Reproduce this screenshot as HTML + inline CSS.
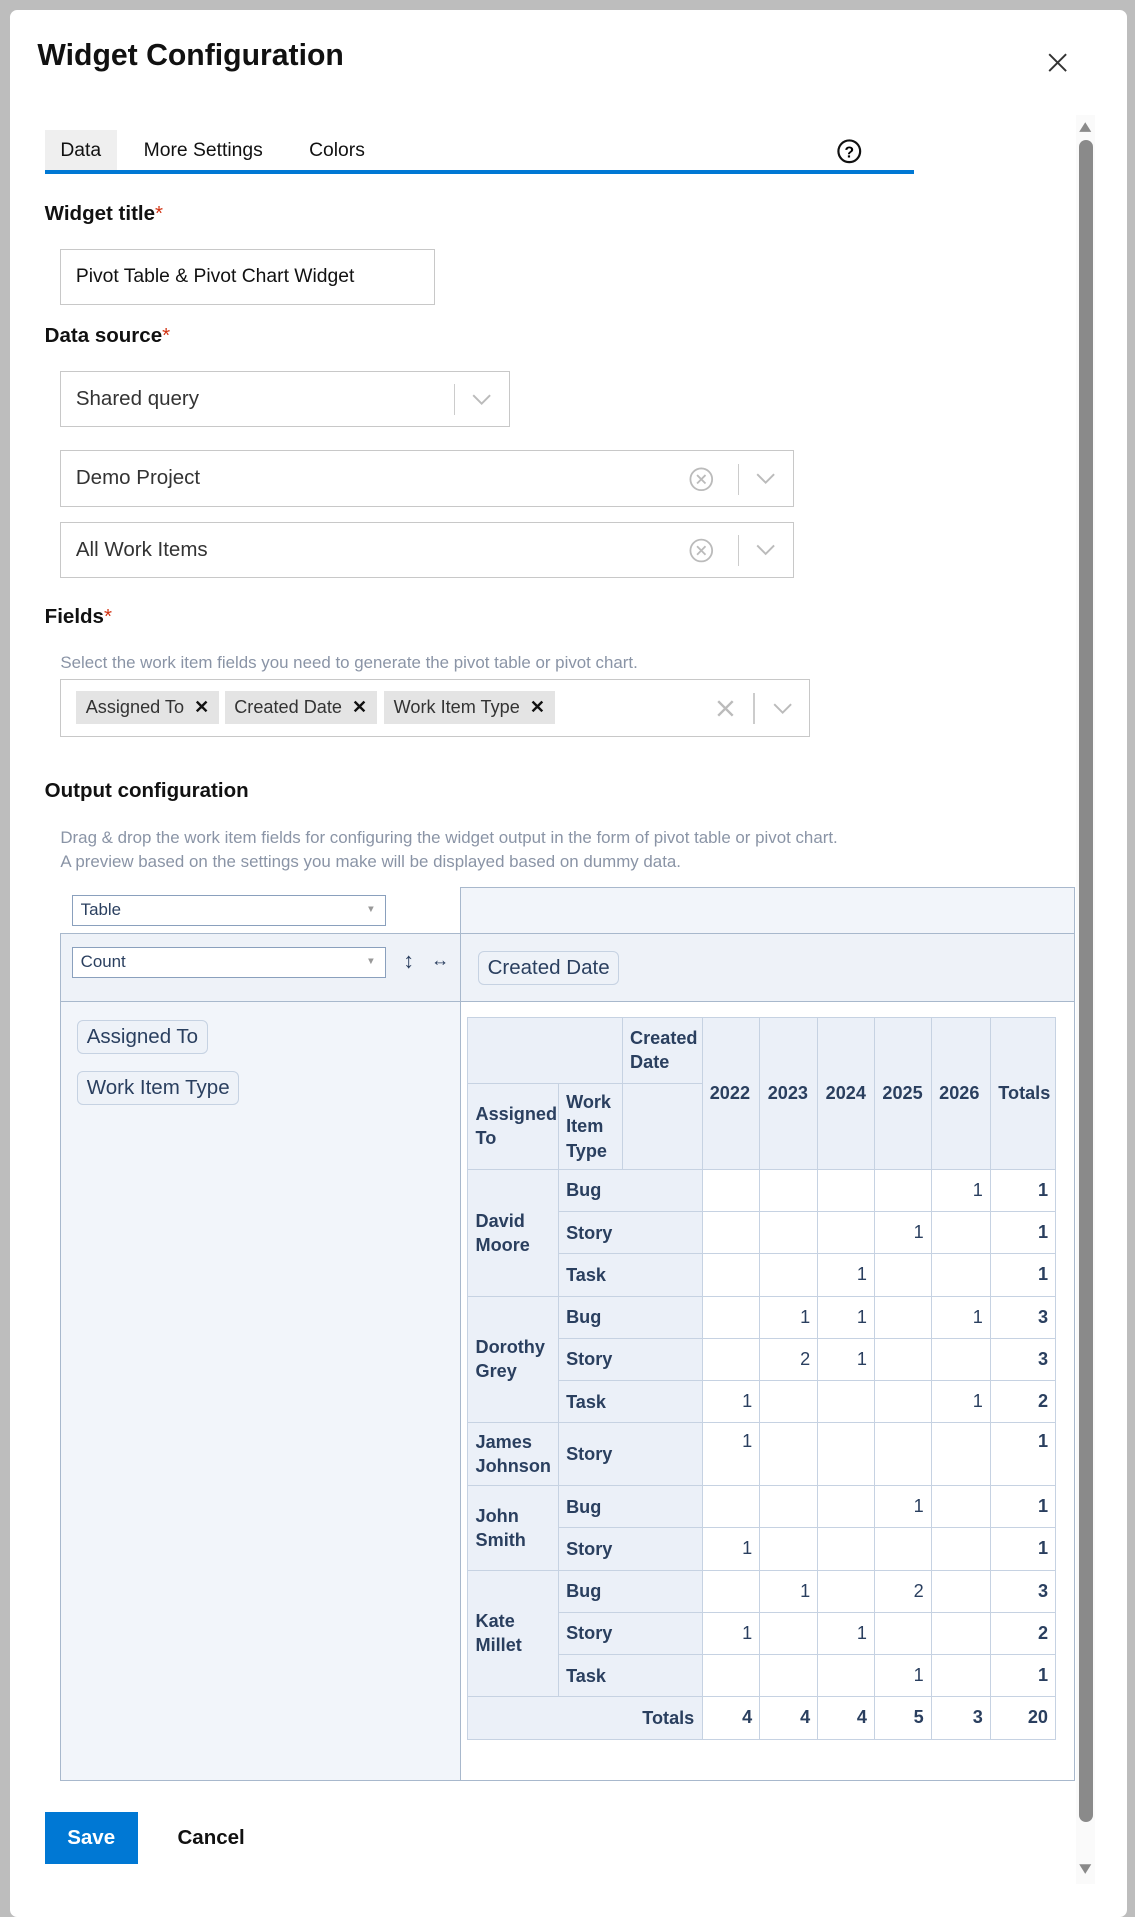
<!DOCTYPE html>
<html><head><meta charset="utf-8"><style>
*{box-sizing:border-box;margin:0;padding:0}
html,body{width:1135px;height:1893px;overflow:hidden;background:#bdbdbd;font-family:"Liberation Sans",sans-serif}
#w{position:absolute;left:0;top:0;width:940px;height:1568px;zoom:1.20745}
.a{position:absolute}
.dlg{left:8px;top:8px;width:925px;height:1580px;background:#fff;border-radius:6px}
.lbl{font-size:17px;font-weight:bold;color:#111}
.req{color:#d13212;font-weight:normal}
.inp{border:1px solid #c8c8c8;background:#fff;font-size:17px;color:#333}
.pill{background:#e4e4e4;font-size:15px;color:#333;height:28px;line-height:28px;padding:0 8px;display:inline-block}
.muted{color:#8a94a6;font-size:14px}
.pv{border:1px solid #a8b8cc}
.sel{background:#fff;border:1px solid #8aa0bd;font-size:14px;color:#2a3f5f;padding-left:6px;line-height:24px}
.chip{border:1px solid #c6d2e2;border-radius:5px;background:#eef2f8;font-size:17px;color:#2a3f5f;padding:0 7px;height:28px;line-height:26px}
table{border-collapse:collapse;font-size:15px;color:#2a3f5f;table-layout:fixed}
td,th{border:1px solid #c6d2e2;padding:0 6px}
th{background:#ebf0f8;font-weight:bold;text-align:left;line-height:20px}
td.v{text-align:right;background:#fff}
td.t{text-align:right;font-weight:bold;background:#fff}
</style></head><body><div id="w">
<div class="a dlg"></div>
<div class="a" style="left:31px;top:32px;font-size:25px;font-weight:bold;color:#111">Widget Configuration</div>
<svg class="a" style="left:868px;top:44px" width="16" height="16"><path d="M1 1L15 15M15 1L1 15" stroke="#333" stroke-width="1.6"/></svg>
<!-- scrollbar -->
<div class="a" style="left:891px;top:95px;width:16px;height:1465px;background:#fafafa"></div>
<svg class="a" style="left:893px;top:100px" width="12" height="10"><path d="M6 1L11 9H1Z" fill="#8a8a8a"/></svg>
<div class="a" style="left:894px;top:116px;width:11px;height:1393px;background:#8a8a8a;border-radius:6px"></div>
<svg class="a" style="left:893px;top:1543px" width="12" height="10"><path d="M6 9L11 1H1Z" fill="#8a8a8a"/></svg>
<!-- tabs -->
<div class="a" style="left:37px;top:108px;width:60px;height:36px;background:#efefef"></div>
<div class="a" style="left:50px;top:116px;font-size:16px;color:#111">Data</div>
<div class="a" style="left:119px;top:116px;font-size:16px;color:#111">More Settings</div>
<div class="a" style="left:256px;top:116px;font-size:16px;color:#111">Colors</div>
<svg class="a" style="left:692px;top:114px" width="22" height="22"><circle cx="11" cy="11" r="9" fill="none" stroke="#111" stroke-width="1.8"/><text x="11" y="16" font-size="13" font-weight="bold" text-anchor="middle" font-family="Liberation Sans">?</text></svg>
<div class="a" style="left:37px;top:141px;width:720px;height:3px;background:#0078d4"></div>
<div class="a lbl" style="left:37px;top:167px">Widget title<span class="req">*</span></div>
<div class="a inp" style="left:50px;top:206px;width:310px;height:47px;line-height:45px;padding-left:12px;color:#111;font-size:16px">Pivot Table &amp; Pivot Chart Widget</div>
<div class="a lbl" style="left:37px;top:268px">Data source<span class="req">*</span></div>
<div class="a inp" style="left:50px;top:307px;width:372px;height:47px;line-height:45px;padding-left:12px">Shared query</div>
<div class="a" style="left:376px;top:318px;width:1px;height:26px;background:#ccc"></div>
<svg class="a" style="left:391px;top:326px" width="16" height="10"><path d="M1 1L8 8L15 1" fill="none" stroke="#bbb" stroke-width="1.6"/></svg>
<div class="a inp" style="left:50px;top:373px;width:608px;height:47px;line-height:45px;padding-left:12px">Demo Project</div>
<div class="a inp" style="left:50px;top:432px;width:608px;height:47px;line-height:45px;padding-left:12px">All Work Items</div>
<svg class="a" style="left:570px;top:386px" width="22" height="80"><circle cx="11" cy="11" r="9" fill="none" stroke="#bbb" stroke-width="1.5"/><path d="M7.5 7.5L14.5 14.5M14.5 7.5L7.5 14.5" stroke="#bbb" stroke-width="1.5"/><circle cx="11" cy="70" r="9" fill="none" stroke="#bbb" stroke-width="1.5"/><path d="M7.5 66.5L14.5 73.5M14.5 66.5L7.5 73.5" stroke="#bbb" stroke-width="1.5"/></svg>
<div class="a" style="left:611px;top:384px;width:1px;height:26px;background:#ccc"></div>
<div class="a" style="left:611px;top:443px;width:1px;height:26px;background:#ccc"></div>
<svg class="a" style="left:626px;top:392px" width="16" height="70"><path d="M1 1L8 8L15 1M1 60L8 67L15 60" fill="none" stroke="#bbb" stroke-width="1.6"/></svg>
<div class="a lbl" style="left:37px;top:501px">Fields<span class="req">*</span></div>
<div class="a muted" style="left:50px;top:541px">Select the work item fields you need to generate the pivot table or pivot chart.</div>
<div class="a inp" style="left:50px;top:562px;width:621px;height:48px"></div>
<div class="a pill" style="left:63px;top:572px">Assigned To &nbsp;<b style="color:#111">✕</b></div>
<div class="a pill" style="left:186px;top:572px">Created Date &nbsp;<b style="color:#111">✕</b></div>
<div class="a pill" style="left:318px;top:572px">Work Item Type &nbsp;<b style="color:#111">✕</b></div>
<svg class="a" style="left:594px;top:580px" width="14" height="14"><path d="M1 1L13 13M13 1L1 13" stroke="#bbb" stroke-width="2"/></svg>
<div class="a" style="left:624px;top:574px;width:1px;height:26px;background:#ccc"></div>
<svg class="a" style="left:640px;top:582px" width="16" height="10"><path d="M1 1L8 8L15 1" fill="none" stroke="#bbb" stroke-width="1.6"/></svg>
<div class="a lbl" style="left:37px;top:645px">Output configuration</div>
<div class="a muted" style="left:50px;top:684px;line-height:20px">Drag &amp; drop the work item fields for configuring the widget output in the form of pivot table or pivot chart.<br>A preview based on the settings you make will be displayed based on dummy data.</div>
<!-- pivot ui -->
<div class="a" style="left:381px;top:735px;width:509px;height:39px;background:#f2f5fa;border:1px solid #a8b8cc"></div>
<div class="a sel" style="left:60px;top:741px;width:260px;height:26px">Table<span style="position:absolute;right:8px;font-size:8px;color:#999">▼</span></div>
<div class="a" style="left:50px;top:773px;width:840px;height:702px;border:1px solid #a8b8cc;background:#fff"></div>
<div class="a" style="left:50px;top:773px;width:840px;height:57px;background:#eef2f8;border:1px solid #a8b8cc"></div>
<div class="a" style="left:50px;top:829px;width:332px;height:646px;background:#f2f5fa;border:1px solid #a8b8cc"></div>
<div class="a" style="left:381px;top:773px;width:1px;height:702px;background:#a8b8cc"></div>
<div class="a sel" style="left:60px;top:784px;width:260px;height:26px">Count<span style="position:absolute;right:8px;font-size:8px;color:#999">▼</span></div>
<div class="a" style="left:334px;top:785px;font-size:18px;color:#2a3f5f">↕</div>
<div class="a" style="left:357px;top:787px;font-size:15px;color:#2a3f5f">↔</div>
<div class="a chip" style="left:396px;top:788px">Created Date</div>
<div class="a chip" style="left:64px;top:845px">Assigned To</div>
<div class="a chip" style="left:64px;top:887px">Work Item Type</div>
<table class="a" style="left:387px;top:842px;width:487px">
<colgroup><col style="width:75px"><col style="width:53px"><col style="width:66px"><col style="width:48px"><col style="width:48px"><col style="width:47px"><col style="width:47px"><col style="width:49px"><col style="width:54px"></colgroup>
<tr style="height:55px"><th colspan="2"></th><th>Created Date</th><th rowspan="2">2022</th><th rowspan="2">2023</th><th rowspan="2">2024</th><th rowspan="2">2025</th><th rowspan="2">2026</th><th rowspan="2">Totals</th></tr>
<tr style="height:71px"><th>Assigned To</th><th>Work Item Type</th><th></th></tr>
<tr style="height:35px"><th rowspan="3">David Moore</th><th colspan="2">Bug</th><td class="v"></td><td class="v"></td><td class="v"></td><td class="v"></td><td class="v">1</td><td class="t">1</td></tr>
<tr style="height:35px"><th colspan="2">Story</th><td class="v"></td><td class="v"></td><td class="v"></td><td class="v">1</td><td class="v"></td><td class="t">1</td></tr>
<tr style="height:35px"><th colspan="2">Task</th><td class="v"></td><td class="v"></td><td class="v">1</td><td class="v"></td><td class="v"></td><td class="t">1</td></tr>
<tr style="height:35px"><th rowspan="3">Dorothy Grey</th><th colspan="2">Bug</th><td class="v"></td><td class="v">1</td><td class="v">1</td><td class="v"></td><td class="v">1</td><td class="t">3</td></tr>
<tr style="height:35px"><th colspan="2">Story</th><td class="v"></td><td class="v">2</td><td class="v">1</td><td class="v"></td><td class="v"></td><td class="t">3</td></tr>
<tr style="height:35px"><th colspan="2">Task</th><td class="v">1</td><td class="v"></td><td class="v"></td><td class="v"></td><td class="v">1</td><td class="t">2</td></tr>
<tr style="height:52px"><th>James Johnson</th><th colspan="2">Story</th><td class="v" style="vertical-align:top;padding-top:6px">1</td><td class="v"></td><td class="v"></td><td class="v"></td><td class="v"></td><td class="t" style="vertical-align:top;padding-top:6px">1</td></tr>
<tr style="height:35px"><th rowspan="2">John Smith</th><th colspan="2">Bug</th><td class="v"></td><td class="v"></td><td class="v"></td><td class="v">1</td><td class="v"></td><td class="t">1</td></tr>
<tr style="height:35px"><th colspan="2">Story</th><td class="v">1</td><td class="v"></td><td class="v"></td><td class="v"></td><td class="v"></td><td class="t">1</td></tr>
<tr style="height:35px"><th rowspan="3">Kate Millet</th><th colspan="2">Bug</th><td class="v"></td><td class="v">1</td><td class="v"></td><td class="v">2</td><td class="v"></td><td class="t">3</td></tr>
<tr style="height:35px"><th colspan="2">Story</th><td class="v">1</td><td class="v"></td><td class="v">1</td><td class="v"></td><td class="v"></td><td class="t">2</td></tr>
<tr style="height:35px"><th colspan="2">Task</th><td class="v"></td><td class="v"></td><td class="v"></td><td class="v">1</td><td class="v"></td><td class="t">1</td></tr>
<tr style="height:35px"><th colspan="3" style="text-align:right">Totals</th><td class="t">4</td><td class="t">4</td><td class="t">4</td><td class="t">5</td><td class="t">3</td><td class="t">20</td></tr>
</table>
<div class="a" style="left:37px;top:1501px;width:77px;height:43px;background:#0078d4;color:#fff;font-size:17px;font-weight:bold;text-align:center;line-height:43px">Save</div>
<div class="a" style="left:147px;top:1512px;font-size:17px;font-weight:bold;color:#111">Cancel</div>
</div></body></html>
